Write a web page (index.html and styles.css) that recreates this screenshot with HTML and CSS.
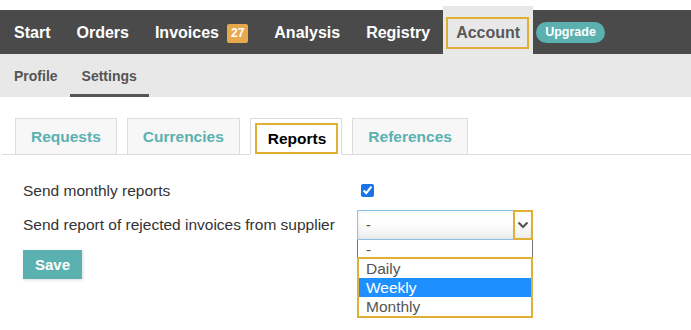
FILE: index.html
```html
<!DOCTYPE html>
<html lang="en">
<head>
    <meta charset="UTF-8">
    <meta name="viewport" content="width=device-width, initial-scale=1.0">
    <title>Settings - Reports</title>
    <link rel="stylesheet" href="styles.css">
</head>
<body>
    <div class="main-nav">
        <a class="nav-item first" href="#">Start</a>
        <a class="nav-item" href="#">Orders</a>
        <a class="nav-item" href="#">Invoices <span class="badge">27</span></a>
        <a class="nav-item" href="#">Analysis</a>
        <a class="nav-item" href="#">Registry</a>
        <a class="nav-item active" href="#"><span class="focus-box">Account</span></a>
        <a class="upgrade" href="#">Upgrade</a>
    </div>
    <div class="sub-nav">
        <a class="sub-item" href="#">Profile</a>
        <a class="sub-item active" href="#">Settings</a>
    </div>

    <div class="tabs">
        <a class="tab" href="#">Requests</a>
        <a class="tab" href="#">Currencies</a>
        <a class="tab active" href="#"><span class="focus-box">Reports</span></a>
        <a class="tab" href="#">References</a>
    </div>

    <form class="settings-form">
        <div class="form-row">
            <label class="form-label" for="monthly">Send monthly reports</label>
            <input type="checkbox" id="monthly" checked>
        </div>
        <div class="form-row">
            <label class="form-label">Send report of rejected invoices from supplier</label>
            <div class="select-wrap">
                <div class="select-box">
                    <span class="select-value">-</span>
                    <span class="select-arrow">
                        <svg width="12" height="8" viewBox="0 0 12 8"><path d="M1.5 1.5 L6 6 L10.5 1.5" fill="none" stroke="#555" stroke-width="2.2"/></svg>
                    </span>
                </div>
                <ul class="select-list">
                    <li>-</li>
                    <li class="group">
                        <ul>
                            <li>Daily</li>
                            <li class="selected">Weekly</li>
                            <li>Monthly</li>
                        </ul>
                    </li>
                </ul>
            </div>
        </div>
        <button type="submit" class="save-btn">Save</button>
    </form>
</body>
</html>
```

FILE: styles.css
```css
* {
    margin: 0;
    padding: 0;
    box-sizing: border-box;
}

html, body {
    min-height: 100vh;
}

body {
    font-family: 'Liberation Sans', Arial, sans-serif;
    background: #fff;
    color: #333;
}

a {
    text-decoration: none;
}

/* top bar */
.main-nav {
    display: flex;
    align-items: center;
    height: 44px;
    margin-top: 10px;
    background: #4a4a4a;
    padding-left: 1px;
}

.nav-item {
    display: flex;
    align-items: center;
    height: 100%;
    padding: 2px 13px 0;
    color: #fff;
    font-weight: bold;
    font-size: 16px;
}

.badge {
    display: inline-block;
    margin-left: 8px;
    background: #e8a94c;
    color: #fff;
    font-size: 12px;
    line-height: 19px;
    padding: 0 4px;
    border-radius: 2px;
}

.nav-item.active {
    align-self: flex-start;
    height: 48px;
    margin-top: -4px;
    padding: 6px 4px 0 3px;
    background: #e8e8e8;
    color: #595959;
}

.focus-box {
    display: block;
    border: 2px solid #e0b034;
}

.nav-item.active .focus-box {
    padding: 5px 7px 5px 8px;
}

.upgrade {
    margin-left: 3px;
    background: #5bb1b0;
    color: #fff;
    font-size: 12.5px;
    font-weight: bold;
    padding: 3px 9px 4px;
    border-radius: 11px;
}

/* second bar */
.sub-nav {
    display: flex;
    height: 43px;
    background: #e8e8e8;
    padding-left: 2px;
}

.sub-item {
    display: flex;
    align-items: center;
    padding: 3px 12px 0;
    color: #555;
    font-weight: bold;
    font-size: 14px;
    border-bottom: 3px solid transparent;
}

.sub-item.active {
    border-bottom-color: #555;
}

/* tabs */
.tabs {
    display: flex;
    gap: 10px;
    margin: 21px 0 0 2px;
    padding-left: 13px;
    border-bottom: 1px solid #ddd;
}

.tab {
    height: 37px;
    margin-bottom: -1px;
    padding: 1px 15px 0;
    display: flex;
    align-items: center;
    background: #f7f7f7;
    border: 1px solid #ddd;
    color: #5bb1b0;
    font-weight: bold;
    font-size: 15.5px;
}

.tab.active {
    background: #fff;
    border-bottom-color: #fff;
    padding: 4px 3px 0 4px;
    align-items: stretch;
    color: #000;
}

.tab.active .focus-box {
    display: flex;
    align-items: center;
    padding: 0 10px 0 11px;
}

/* form */
.settings-form {
    padding: 27px 0 0 23px;
}

.form-row {
    display: flex;
    align-items: center;
    margin-bottom: 10px;
}

.form-row:first-child {
    height: 17px;
    margin-bottom: 11px;
}

.form-label {
    width: 334px;
    font-size: 15.5px;
    color: #333;
}

input[type="checkbox"] {
    width: 13px;
    height: 13px;
    margin: 0 0 0 4px;
    accent-color: #1a73e8;
}

.select-wrap {
    position: relative;
    width: 176px;
}

.select-box {
    display: flex;
    height: 30px;
    border: 1px solid #8cc2ea;
    background: linear-gradient(#fff 40%, #eee);
    box-shadow: inset 0 0 4px rgba(0, 0, 0, 0.08);
}

.select-value {
    flex: 1;
    display: flex;
    align-items: center;
    padding-left: 8px;
    font-size: 14px;
    color: #444;
}

.select-arrow {
    width: 20px;
    margin: -1px -1px -1px 0;
    border: 2px solid #e0b034;
    display: flex;
    align-items: center;
    justify-content: center;
}

.select-list {
    position: absolute;
    top: 30px;
    left: 0;
    width: 176px;
    list-style: none;
    background: #fff;
    border: 1px solid #767676;
    border-top: none;
    font-size: 15.5px;
    color: #555;
    z-index: 2;
}

.select-list li {
    height: 19px;
    line-height: 19px;
    padding-left: 8px;
}

.select-list li.group {
    height: auto;
    padding: 0;
}

.select-list .group ul {
    list-style: none;
    border: 2px solid #e0b034;
    margin: -2px -1px -1px;
}

.select-list .group li {
    padding-left: 7px;
}

.select-list li.selected {
    background: #1e8fff;
    color: #fff;
}

.save-btn {
    width: 59px;
    height: 29px;
    background: #5bb1b0;
    border: none;
    color: #fff;
    font-family: inherit;
    font-size: 15px;
    font-weight: bold;
    box-shadow: 1px 1px 3px rgba(0, 0, 0, 0.15);
    cursor: pointer;
}
```
